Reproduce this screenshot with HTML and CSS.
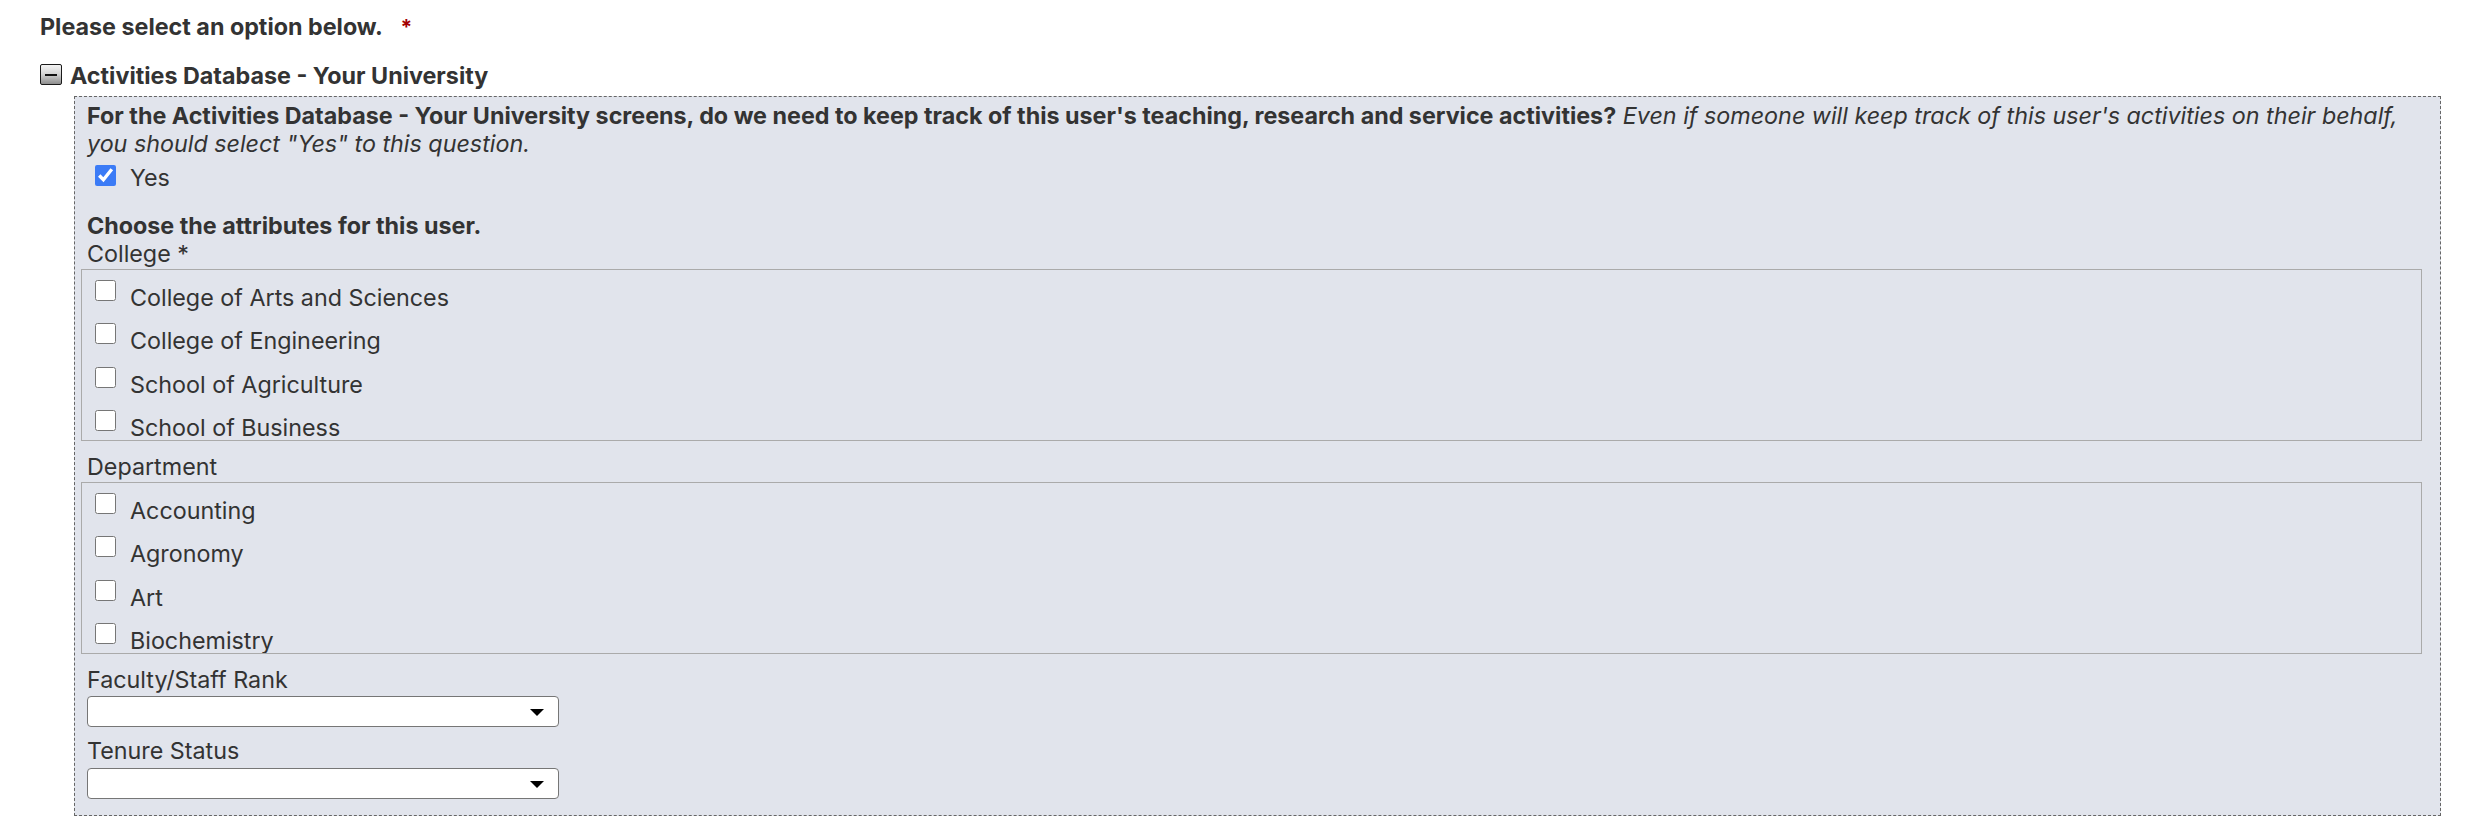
FILE: index.html
```html
<!DOCTYPE html>
<html lang="en">
<head>
    <meta charset="UTF-8">
    <meta name="viewport" content="width=device-width, initial-scale=1.0">
    <title>Activities Database - User Settings</title>
    <link rel="stylesheet" href="styles.css">
</head>
<body>
    <div class="page">
        <div class="prompt">Please select an option below. <span class="req">*</span></div>

        <div class="group-title">
            <span class="toggle"></span>
            <span>Activities Database - Your University</span>
        </div>

        <div class="panel">
            <p class="question"><b>For the Activities Database - Your University screens, do we need to keep track of this user's teaching, research and service activities?</b> <i>Even if someone will keep track of this user's activities on their behalf,<br>you should select "Yes" to this question.</i></p>

            <label class="yes-row"><input type="checkbox" checked>Yes</label>

            <p class="section-head">Choose the attributes for this user.</p>

            <div class="field-label first">College *</div>
            <div class="opt-list">
                <label class="opt"><input type="checkbox">College of Arts and Sciences</label>
                <label class="opt"><input type="checkbox">College of Engineering</label>
                <label class="opt"><input type="checkbox">School of Agriculture</label>
                <label class="opt"><input type="checkbox">School of Business</label>
                <label class="opt"><input type="checkbox">School of Education</label>
                <label class="opt"><input type="checkbox">School of Nursing</label>
            </div>

            <div class="field-label">Department</div>
            <div class="opt-list">
                <label class="opt"><input type="checkbox">Accounting</label>
                <label class="opt"><input type="checkbox">Agronomy</label>
                <label class="opt"><input type="checkbox">Art</label>
                <label class="opt"><input type="checkbox">Biochemistry</label>
                <label class="opt"><input type="checkbox">Biology</label>
                <label class="opt"><input type="checkbox">Chemistry</label>
            </div>

            <div class="field-label">Faculty/Staff Rank</div>
            <div class="select-wrap">
                <select>
                    <option></option>
                    <option>Professor</option>
                    <option>Associate Professor</option>
                    <option>Assistant Professor</option>
                </select>
            </div>

            <div class="field-label">Tenure Status</div>
            <div class="select-wrap">
                <select>
                    <option></option>
                    <option>Tenured</option>
                    <option>Tenure Track</option>
                    <option>Non-Tenure Track</option>
                </select>
            </div>
        </div>
    </div>
</body>
</html>
```

FILE: styles.css
```css
* {
    box-sizing: border-box;
}

body {
    margin: 0;
    font-family: Inter, "Noto Sans", sans-serif;
    font-size: 23.3px;
    line-height: 28px;
    color: #333;
    background: #fff;
}

.page {
    padding: 13px 29px 0 40px;
}

.prompt {
    font-weight: 700;
}

.req {
    color: #a30000;
    margin-left: 13px;
    font-size: 21px;
}

.group-title {
    display: flex;
    align-items: flex-start;
    margin-top: 20px;
    font-weight: 700;
}

.toggle {
    display: flex;
    align-items: center;
    justify-content: center;
    width: 22px;
    height: 21px;
    margin: 2px 8px 0 0;
    border: 1px solid #1a1a1a;
    border-radius: 2px;
    background: linear-gradient(#f4f4f4, #d6d6d6 45%, #8e8e8e);
}

.toggle::after {
    content: "";
    width: 12px;
    height: 2px;
    background: #111;
}

.panel {
    margin: 6px 0 0 34px;
    padding: 5px 18px 16px 6px;
    background: #e1e4ec;
    border: 1px dashed #666;
}

.question,
.section-head,
.field-label {
    margin: 0;
    padding-left: 6px;
}

.question b {
    font-weight: 700;
}

.yes-row {
    display: flex;
    align-items: flex-start;
    margin-top: 6px;
}

.yes-row input {
    width: 21px;
    height: 21px;
    margin: 1px 14px 0 14px;
    accent-color: #3b7bf6;
}

.section-head {
    margin-top: 20px;
    font-weight: 700;
}

.field-label {
    margin-top: 12px;
}

.field-label.first {
    margin-top: 0;
}

.select-wrap + .field-label {
    margin-top: 10px;
}

.opt-list {
    height: 172px;
    margin-top: 1px;
    padding-top: 14px;
    border: 1px solid #aaa;
    overflow: hidden;
}

.opt {
    display: flex;
    align-items: flex-start;
    margin-bottom: 15.3px;
}

.opt input {
    width: 21px;
    height: 21px;
    margin: -4px 14px 0 13px;
}

.select-wrap {
    position: relative;
    width: 472px;
    margin: 2px 0 0 6px;
}

.select-wrap + .field-label + .select-wrap {
    margin-top: 3px;
}

.select-wrap select {
    display: block;
    width: 100%;
    height: 31px;
    padding: 0 8px;
    font: inherit;
    font-size: 18px;
    color: #333;
    background: #fff;
    border: 1px solid #767676;
    border-radius: 4px;
    appearance: none;
}

.select-wrap::after {
    content: "";
    position: absolute;
    right: 15px;
    top: 13px;
    border-left: 7.5px solid transparent;
    border-right: 7.5px solid transparent;
    border-top: 7px solid #000;
    pointer-events: none;
}
```
